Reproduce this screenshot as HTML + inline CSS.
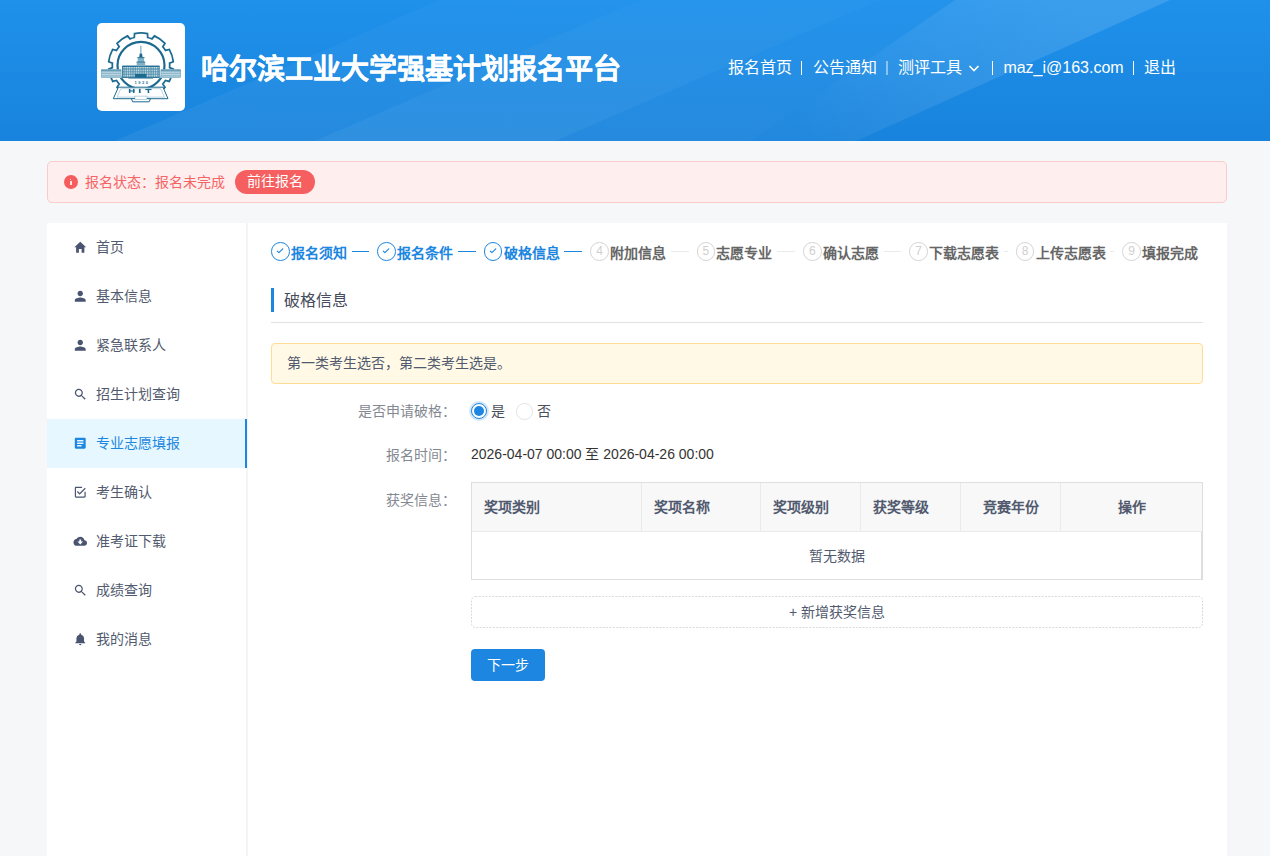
<!DOCTYPE html>
<html lang="zh-CN">
<head>
<meta charset="utf-8">
<title>哈尔滨工业大学强基计划报名平台</title>
<style>
*{box-sizing:border-box;margin:0;padding:0}
html,body{width:1270px;height:856px;overflow:hidden}
body{font-family:"Liberation Sans",sans-serif;background:#f5f7f9;color:#333;font-size:14px;position:relative}
.abs{position:absolute}
/* header */
#hdr{position:absolute;left:0;top:0;width:1270px;height:141px;background:linear-gradient(180deg,#1f91eb 0%,#1883dc 100%);overflow:hidden}
#hdr svg.bg{position:absolute;left:0;top:0}
#logo{position:absolute;left:97px;top:23px;width:88px;height:88px;background:#fff;border-radius:5px}
#title{position:absolute;left:200.9px;top:47.6px;-webkit-text-stroke:.22px #fff;font-size:28px;line-height:44px;font-weight:bold;color:#fff;white-space:nowrap}
#nav{position:absolute;left:728px;top:56px;height:24px;line-height:24px;font-size:16px;color:#fff;white-space:nowrap}
#nav span{position:absolute;top:0}
#nav .sep{position:absolute;top:4.7px;width:1.35px;height:14px;background:#fff}
/* alert */
#alert{position:absolute;left:47px;top:161px;width:1180px;height:42px;background:#feeeee;border:1px solid #fbcbcb;border-radius:5px}
#alert .ic{position:absolute;left:15.7px;top:12.7px;width:14.3px;height:14.3px;border-radius:50%;background:#f55c5c}
#alert .ic:before{content:"";position:absolute;left:6.2px;top:4.1px;width:1.5px;height:1.3px;background:#fde3e3}
#alert .ic:after{content:"";position:absolute;left:6.2px;top:6px;width:1.7px;height:4.7px;background:#fde3e3}
#alert .tx{position:absolute;left:36.6px;top:8.6px;line-height:22px;font-size:14px;color:#f56464;white-space:nowrap}
#alert .btn{position:absolute;left:187.3px;top:8.3px;width:80.2px;height:23.6px;border-radius:12px;background:#f55f5f;color:#fff;font-size:14px;line-height:23.6px;text-align:center;text-indent:-1.5px}
/* main */
#main{position:absolute;left:47px;top:223px;width:1180px;height:640px;background:#fff}
#side{position:absolute;left:0;top:0;width:201px;height:640px;border-right:2px solid #f4f4f5}
.mi{position:absolute;left:0;width:200px;height:48px;line-height:48px;font-size:14px;color:#515a6e}
.mi .t{position:absolute;left:49.2px;top:0;white-space:nowrap}
.mi svg{position:absolute;left:26.2px;top:17.1px;width:14.5px;height:14.5px;fill:#4a5470}
.mi.on{background:#e6f7ff;color:#1c86e0;border-right:2px solid #1c86e0;height:49px;z-index:2}
.mi.on svg{fill:#1c86e0}
#cont{position:absolute;left:200px;top:0;width:980px;height:640px}

#steps{position:absolute;left:0;top:0}
.st{position:absolute;top:19.5px;height:18px;white-space:nowrap}
.st .c{position:absolute;left:0;top:-.4px;width:18.6px;height:18.6px;border:1px solid #d5d5d5;border-radius:50%;text-align:center;line-height:16px;color:#cfcfcf}
.st .c b{font-weight:normal;font-size:12px;display:block;line-height:16.6px}
.st .c svg{position:absolute;left:-1px;top:-1px}
.st.done .c{border-color:#1c86e0}
.st .tt{position:absolute;left:19.8px;top:-0.2px;line-height:22px;font-size:14px;font-weight:bold;color:#666}
.st.done .tt{color:#1c86e0}
.st .ln{position:absolute;top:8px;height:1px;background:#e8eaec}
.st.done .ln{background:#1c86e0}
#sec{position:absolute;left:24px;top:65px;width:932px;height:35px;border-bottom:1px solid #e0e2e6}
#sec i{position:absolute;left:0;top:0;width:3px;height:24px;background:#1c86e0}
#sec span{position:absolute;left:12.6px;top:.7px;line-height:24px;font-size:16px;color:#464c5b}
#warn{position:absolute;left:24px;top:119.7px;width:932px;height:41.2px;border:1px solid #ffdc94;background:#fff9e6;border-radius:4px;padding-left:15.3px;line-height:39.4px;font-size:14px;color:#515a6e}
.lab{position:absolute;left:0;width:209px;text-align:right;font-size:14px;line-height:22px;color:#848891;margin-top:-223px;margin-left:0;white-space:nowrap}
.rad{position:absolute;width:16px;height:16px;border:1px solid #dcdee2;border-radius:50%;background:#fff}
.rad.on{border-color:#1c86e0;box-shadow:0 0 0 2px rgba(28,134,224,.2)}
.rad.on i{position:absolute;left:2px;top:2px;width:10px;height:10px;border-radius:50%;background:#1c86e0}
.rt{position:absolute;line-height:22px;font-size:14px;color:#4a4f5c}
.val{position:absolute;line-height:22px;font-size:14px;color:#333;white-space:nowrap}
#tbl{position:absolute;left:224px;top:259px;width:732px;height:98px;border:1px solid #dcdee2;border-right-width:2px}
#tbl .th{position:absolute;top:0;height:49px;background:#f8f8f9;border-right:1px solid #e8eaec;border-bottom:1px solid #e8eaec;font-weight:bold;font-size:14px;color:#515a6e;line-height:48.7px}
#tbl .th span{position:absolute;top:0}
#tbl .empty{position:absolute;left:0;top:49px;width:730px;height:47px;line-height:48px;text-align:center;color:#515a6e;font-size:14px}
#add{position:absolute;left:224px;top:373px;width:732px;height:32px;text-align:center;line-height:32px;font-size:14px;color:#515a6e}
#next{position:absolute;left:224px;top:426px;width:74px;height:32px;border-radius:4px;background:#1c86e0;color:#fff;text-align:center;line-height:32px;font-size:14px}
</style>
</head>
<body>
<div id="hdr">
<svg class="bg" width="1270" height="141" viewBox="0 0 1270 141">
<defs>
<linearGradient id="gB" gradientUnits="userSpaceOnUse" x1="800" y1="141" x2="1080" y2="0"><stop offset="0" stop-color="#fff" stop-opacity=".04"/><stop offset=".5" stop-color="#fff" stop-opacity=".09"/><stop offset="1" stop-color="#fff" stop-opacity=".125"/></linearGradient>
<linearGradient id="gA" gradientUnits="userSpaceOnUse" x1="0" y1="141" x2="0" y2="0"><stop offset="0" stop-color="#fff" stop-opacity=".105"/><stop offset="1" stop-color="#fff" stop-opacity=".035"/></linearGradient>
<linearGradient id="gC" gradientUnits="userSpaceOnUse" x1="0" y1="141" x2="0" y2="0"><stop offset="0" stop-color="#fff" stop-opacity=".06"/><stop offset="1" stop-color="#fff" stop-opacity=".02"/></linearGradient>
</defs>
<polygon points="115,141 440,0 640,0 315,141" fill="url(#gC)"/>
<polygon points="315,141 640,0 880,0 555,141" fill="url(#gA)"/>
<polygon points="555,141 880,0 955,0 750,141" fill="url(#gC)"/>
<polygon points="750,141 955,0 1170,0 856,141" fill="url(#gB)"/>
</svg>
  <div id="logo"><svg width="88" height="88" viewBox="0 0 88 88">
<defs>
<pattern id="win" width="2.25" height="2.7" patternUnits="userSpaceOnUse"><rect width="2.25" height="2.7" fill="#3c82a2"/><rect x=".45" y=".55" width="1.4" height="1.7" fill="#e4eff4"/></pattern>
<pattern id="win2" width="1.95" height="2.4" patternUnits="userSpaceOnUse"><rect width="1.95" height="2.4" fill="#6ea5bd"/><rect x=".4" y=".5" width="1.25" height="1.5" fill="#f1f7fa"/></pattern>
<pattern id="strp" width="1.3" height="4" patternUnits="userSpaceOnUse"><rect width="1.3" height="4" fill="#3c82a2"/><rect x=".35" width=".6" height="4" fill="#d4e5ed"/></pattern>
</defs>
<g fill="none" stroke="#1c6a8f">
<path d="M37.30 14.49 L37.52 10.55 A32.5 32.5 0 0 1 50.48 10.55 L50.70 14.49 A28.7 28.7 0 0 1 54.98 15.88 L57.48 12.83 A32.5 32.5 0 0 1 67.96 20.44 L65.82 23.76 A28.7 28.7 0 0 1 68.47 27.40 L72.29 26.40 A32.5 32.5 0 0 1 76.29 38.72 L72.61 40.15 A28.7 28.7 0 0 1 72.61 44.65 L76.29 46.08 A32.5 32.5 0 0 1 72.29 58.40 L68.47 57.40 A28.7 28.7 0 0 1 65.82 61.04 L67.96 64.36 A32.5 32.5 0 0 1 57.48 71.97 L54.98 68.92 A28.7 28.7 0 0 1 50.70 70.31 L50.48 74.25 A32.5 32.5 0 0 1 37.52 74.25 L37.30 70.31 A28.7 28.7 0 0 1 33.02 68.92 L30.52 71.97 A32.5 32.5 0 0 1 20.04 64.36 L22.18 61.04 A28.7 28.7 0 0 1 19.53 57.40 L15.71 58.40 A32.5 32.5 0 0 1 11.71 46.08 L15.39 44.65 A28.7 28.7 0 0 1 15.39 40.15 L11.71 38.72 A32.5 32.5 0 0 1 15.71 26.40 L19.53 27.40 A28.7 28.7 0 0 1 22.18 23.76 L20.04 20.44 A32.5 32.5 0 0 1 30.52 12.83 L33.02 15.88 A28.7 28.7 0 0 1 37.30 14.49 Z" stroke-width="1.75" stroke-linejoin="miter"/>
<circle cx="44" cy="42.4" r="23.5" stroke-width="2.2"/>
</g>
<polygon points="21.4,64.2 66,64.2 71,75.7 16.3,75.7" fill="#fff" stroke="#1c6a8f" stroke-width="1"/>
<polygon points="23.8,65.7 63.6,65.7 67.4,74.1 20,74.1" fill="none" stroke="#86b2c6" stroke-width=".55"/>
<polygon points="34.4,75.7 53.4,75.7 52.2,78.8 35.6,78.8" fill="#fff" stroke="#1c6a8f" stroke-width="1"/>
<polygon points="37.5,73.2 50.3,73.2 49.6,76.4 38.2,76.4" fill="#fff" stroke="#86b2c6" stroke-width=".55"/>
<g fill="#1c6a8f">
<rect x="31.9" y="65.9" width="1.5" height="4.1"/><rect x="36" y="65.9" width="1.5" height="4.1"/><rect x="31.9" y="67.4" width="5.6" height="1.1"/>
<rect x="41.9" y="65.9" width="1.7" height="4.1"/>
<rect x="48.3" y="65.9" width="6.2" height="1.2"/><rect x="50.6" y="65.9" width="1.6" height="4.1"/>
</g>
<rect x="3.9" y="46.4" width="20.6" height="8.6" fill="#fff"/>
<rect x="63.5" y="46.4" width="20.6" height="8.6" fill="#fff"/>
<rect x="4.3" y="46.9" width="19.8" height="7.6" fill="url(#win2)" stroke="#5b98b3" stroke-width=".5"/>
<rect x="63.9" y="46.9" width="19.8" height="7.6" fill="url(#win2)" stroke="#5b98b3" stroke-width=".5"/>
<rect x="4.3" y="46.6" width="19.8" height=".9" fill="#3c82a2"/>
<rect x="63.9" y="46.6" width="19.8" height=".9" fill="#3c82a2"/>
<rect x="25.6" y="43.1" width="36.6" height="11.5" fill="url(#win)" stroke="#1c6a8f" stroke-width=".8"/>
<rect x="25.6" y="42.8" width="36.6" height="1" fill="#1c6a8f"/>
<rect x="38" y="50.9" width="11.4" height="3.7" fill="#1c6a8f"/>
<rect x="39.7" y="39.2" width="8.4" height="4" fill="url(#strp)"/>
<rect x="40.7" y="34.8" width="6.4" height="4.2" fill="url(#strp)"/>
<rect x="39.5" y="38.6" width="8.8" height=".9" fill="#1c6a8f"/>
<rect x="40.3" y="34.2" width="7.2" height=".9" fill="#1c6a8f"/>
<polygon points="42.1,34.2 45.7,34.2 45,30.4 42.8,30.4" fill="#1c6a8f"/>
<rect x="43.5" y="22.8" width=".8" height="8" fill="#3c82a2"/>
<rect x="31.4" y="55.2" width="24.8" height=".6" fill="#3c82a2"/>
<text x="45" y="61" text-anchor="middle" font-family="Liberation Sans, sans-serif" font-weight="bold" font-size="4.1" letter-spacing="1.5" fill="#2f7899">1920</text>
</svg></div>
  <div id="title">哈尔滨工业大学强基计划报名平台</div>
  <div id="nav"><span style="left:0">报名首页</span><i class="sep" style="left:73px"></i>
<span style="left:84.5px">公告通知</span><i class="sep" style="left:158.2px;opacity:.45"></i>
<span style="left:169.7px">测评工具</span>
<svg style="position:absolute;left:239.7px;top:7.5px" width="12" height="9" viewBox="0 0 12 9"><polyline points="1.5,2 6,6.5 10.5,2" fill="none" stroke="#fff" stroke-width="1.6"/></svg>
<i class="sep" style="left:264px"></i>
<span style="left:275.4px">maz_i@163.com</span><i class="sep" style="left:405px"></i>
<span style="left:416.3px">退出</span></div>
</div>
<div id="alert">
  <div class="ic"></div>
  <div class="tx">报名状态：报名未完成</div>
  <div class="btn">前往报名</div>
</div>
<div id="main">
  <div id="side">
<div class="mi" style="top:0px"><svg viewBox="0 0 512 512"><path d="M208 448V320h96v128h97.6V256H464L256 64 48 256h62.4v192z"/></svg><span class="t">首页</span></div>
<div class="mi" style="top:49px"><svg viewBox="0 0 512 512"><path d="M256 256c52.805 0 96-43.201 96-96s-43.195-96-96-96-96 43.201-96 96 43.195 96 96 96zm0 48c-63.598 0-192 32.402-192 96v48h384v-48c0-63.598-128.402-96-192-96z"/></svg><span class="t">基本信息</span></div>
<div class="mi" style="top:98px"><svg viewBox="0 0 512 512"><path d="M256 256c52.805 0 96-43.201 96-96s-43.195-96-96-96-96 43.201-96 96 43.195 96 96 96zm0 48c-63.598 0-192 32.402-192 96v48h384v-48c0-63.598-128.402-96-192-96z"/></svg><span class="t">紧急联系人</span></div>
<div class="mi" style="top:147px"><svg viewBox="0 0 512 512"><path d="M337.509 305.372h-17.501l-6.571-5.486c20.791-25.232 33.922-57.054 33.922-93.257C347.358 127.632 283.896 64 205.135 64 127.452 64 64 127.632 64 206.629s63.452 142.628 142.225 142.628c35.011 0 67.831-13.167 92.991-34.008l6.561 5.487v17.551L415.18 448 448 415.086 337.509 305.372zm-131.284 0c-54.702 0-98.463-43.887-98.463-98.743 0-54.858 43.761-98.742 98.463-98.742 54.7 0 98.462 43.884 98.462 98.742 0 54.856-43.762 98.743-98.462 98.743z"/></svg><span class="t">招生计划查询</span></div>
<div class="mi on" style="top:196px"><svg viewBox="0 0 512 512"><path d="M408 64H104c-22.091 0-40 17.908-40 40v304c0 22.092 17.909 40 40 40h304c22.092 0 40-17.908 40-40V104c0-22.092-17.908-40-40-40zM304 368H144v-48h160v48zm64-88H144v-48h224v48zm0-88H144v-48h224v48z"/></svg><span class="t">专业志愿填报</span></div>
<div class="mi" style="top:245px"><svg viewBox="0 0 512 512"><path d="M168.531 215.469l-29.864 29.864 96 96L448 128l-29.864-29.864-183.469 182.395-66.136-65.062zm236.802 189.864H106.667V106.667H320V64H106.667C83.198 64 64 83.198 64 106.667v298.666C64 428.802 83.198 448 106.667 448h298.666C428.802 448 448 428.802 448 405.333V234.667h-42.667v170.666z"/></svg><span class="t">考生确认</span></div>
<div class="mi" style="top:294px"><svg viewBox="0 0 512 512"><path d="M403.002 217.001C388.998 148.002 328.998 96 256 96c-57.998 0-107.998 32.998-132.998 81.001C63.002 183.002 16 233.998 16 296c0 65.996 53.999 120 120 120h260c55 0 100-45 100-100 0-52.998-40.996-96.001-92.998-98.999zM224 268v-76h64v76h68L256 368 156 268h68z"/></svg><span class="t">准考证下载</span></div>
<div class="mi" style="top:343px"><svg viewBox="0 0 512 512"><path d="M337.509 305.372h-17.501l-6.571-5.486c20.791-25.232 33.922-57.054 33.922-93.257C347.358 127.632 283.896 64 205.135 64 127.452 64 64 127.632 64 206.629s63.452 142.628 142.225 142.628c35.011 0 67.831-13.167 92.991-34.008l6.561 5.487v17.551L415.18 448 448 415.086 337.509 305.372zm-131.284 0c-54.702 0-98.463-43.887-98.463-98.743 0-54.858 43.761-98.742 98.463-98.742 54.7 0 98.462 43.884 98.462 98.742 0 54.856-43.762 98.743-98.462 98.743z"/></svg><span class="t">成绩查询</span></div>
<div class="mi" style="top:392px"><svg viewBox="0 0 512 512"><path d="M256 464c22.779 0 41.411-18.719 41.411-41.6h-82.823c0 22.881 18.633 41.6 41.412 41.6zm134.589-124.8V224.8c0-63.44-44.516-117.518-103.53-131.041V79.2c0-17.682-13.457-31.2-31.059-31.2s-31.059 13.518-31.059 31.2v14.559c-59.015 13.523-103.53 67.601-103.53 131.041v114.4L80 380.8v20.8h352v-20.8l-41.411-41.6z"/></svg><span class="t">我的消息</span></div>
</div>
  <div id="cont">
<div id="steps">
<div class="st done" style="left:24.0px"><div class="c"><svg viewBox="0 0 18.6 18.6" width="18.6" height="18.6"><polyline points="6.3,9.1 7.9,10.6 11.8,6.9" fill="none" stroke="#1c86e0" stroke-width="1.15" stroke-linecap="round" stroke-linejoin="round"/></svg></div><div class="tt">报名须知</div><div class="ln" style="left:80.5px;width:17.9px"></div></div>
<div class="st done" style="left:130.4px"><div class="c"><svg viewBox="0 0 18.6 18.6" width="18.6" height="18.6"><polyline points="6.3,9.1 7.9,10.6 11.8,6.9" fill="none" stroke="#1c86e0" stroke-width="1.15" stroke-linecap="round" stroke-linejoin="round"/></svg></div><div class="tt">报名条件</div><div class="ln" style="left:80.5px;width:17.9px"></div></div>
<div class="st done" style="left:236.8px"><div class="c"><svg viewBox="0 0 18.6 18.6" width="18.6" height="18.6"><polyline points="6.3,9.1 7.9,10.6 11.8,6.9" fill="none" stroke="#1c86e0" stroke-width="1.15" stroke-linecap="round" stroke-linejoin="round"/></svg></div><div class="tt">破格信息</div><div class="ln" style="left:80.5px;width:17.9px"></div></div>
<div class="st" style="left:343.2px"><div class="c"><b>4</b></div><div class="tt">附加信息</div><div class="ln" style="left:80.5px;width:17.9px"></div></div>
<div class="st" style="left:449.6px"><div class="c"><b>5</b></div><div class="tt">志愿专业</div><div class="ln" style="left:80.5px;width:17.9px"></div></div>
<div class="st" style="left:556.0px"><div class="c"><b>6</b></div><div class="tt">确认志愿</div><div class="ln" style="left:80.5px;width:17.9px"></div></div>
<div class="st" style="left:662.4px"><div class="c"><b>7</b></div><div class="tt">下载志愿表</div><div class="ln" style="left:94.5px;width:3.9px"></div></div>
<div class="st" style="left:768.8px"><div class="c"><b>8</b></div><div class="tt">上传志愿表</div><div class="ln" style="left:94.5px;width:3.9px"></div></div>
<div class="st" style="left:875.2px"><div class="c"><b>9</b></div><div class="tt">填报完成</div></div>
</div>
<div id="sec"><i></i><span>破格信息</span></div>
<div id="warn">第一类考生选否，第二类考生选是。</div>
<div class="lab" style="top:399.7px">是否申请破格：</div>
<div class="rad on" style="left:224px;top:180px"><i></i></div><div class="rt" style="left:243.5px;top:177px">是</div>
<div class="rad" style="left:269.4px;top:180px;width:16.5px;height:16.5px;border-color:#e1e3e7"></div><div class="rt" style="left:289.5px;top:177px">否</div>
<div class="lab" style="top:443.7px">报名时间：</div>
<div class="val" style="left:224px;top:220px">2026-04-07 00:00 至 2026-04-26 00:00</div>
<div class="lab" style="top:488.6px">获奖信息：</div>
<div id="tbl">
  <div class="th" style="left:0;width:170px"><span style="left:12px">奖项类别</span></div>
  <div class="th" style="left:170px;width:119.4px"><span style="left:12px">奖项名称</span></div>
  <div class="th" style="left:289.4px;width:100px"><span style="left:12px">奖项级别</span></div>
  <div class="th" style="left:389.4px;width:100px"><span style="left:12px">获奖等级</span></div>
  <div class="th" style="left:489.4px;width:100px;text-align:center"><span style="left:0;right:0">竞赛年份</span></div>
  <div class="th" style="left:589.4px;width:140.6px;text-align:center;border-right:0"><span style="left:0;right:0">操作</span></div>
  <div class="empty">暂无数据</div>
</div>
<div id="add"><svg width="732" height="32" style="position:absolute;left:0;top:0"><rect x=".5" y=".5" width="731" height="31" rx="4" ry="4" fill="none" stroke="#d6d9de" stroke-width="1" stroke-dasharray="2 1.33"/></svg>+ 新增获奖信息</div>
<div id="next">下一步</div>
</div>
</div>
</body>
</html>
